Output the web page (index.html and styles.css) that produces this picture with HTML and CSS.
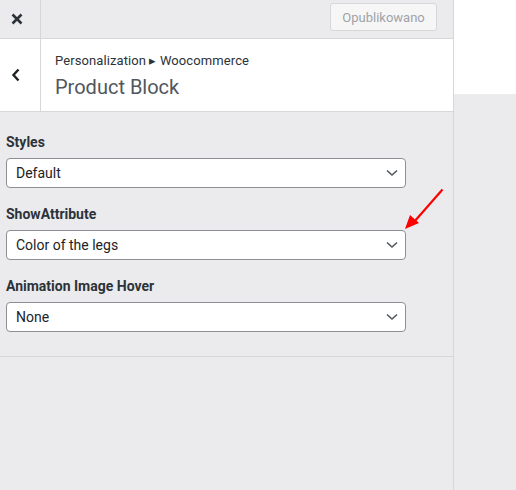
FILE: index.html
```html
<!DOCTYPE html>
<html>
<head>
<meta charset="utf-8">
<link rel="stylesheet" href="styles.css">
</head>
<body>
<div class="page">
  <aside class="sidebar">
    <div class="topbar">
      <div class="close-btn">
        <svg width="14" height="14" viewBox="0 0 14 14"><path d="M2.5 2.5 L11.5 11.5 M11.5 2.5 L2.5 11.5" stroke="#2c3338" stroke-width="2.6" stroke-linecap="butt"/></svg>
      </div>
      <div class="spacer"></div>
      <button class="publish" disabled>Opublikowano</button>
    </div>
    <div class="header">
      <div class="back-btn">
        <svg width="12" height="16" viewBox="0 0 12 16"><path d="M8.5 2.5 L3.5 8 L8.5 13.5" fill="none" stroke="#1d2327" stroke-width="2.4"/></svg>
      </div>
      <div class="titles">
        <div class="crumb">Personalization ▸ Woocommerce</div>
        <div class="title">Product Block</div>
      </div>
    </div>
    <div class="controls">
      <div class="control">
        <div class="label">Styles</div>
        <div class="select"><span>Default</span><svg class="chev" width="12" height="8" viewBox="0 0 12 8"><path d="M1 1.5 L6 6 L11 1.5" fill="none" stroke="#50575e" stroke-width="1.6"/></svg></div>
      </div>
      <div class="control">
        <div class="label">ShowAttribute</div>
        <div class="select"><span>Color of the legs</span><svg class="chev" width="12" height="8" viewBox="0 0 12 8"><path d="M1 1.5 L6 6 L11 1.5" fill="none" stroke="#50575e" stroke-width="1.6"/></svg></div>
      </div>
      <div class="control">
        <div class="label">Animation Image Hover</div>
        <div class="select"><span>None</span><svg class="chev" width="12" height="8" viewBox="0 0 12 8"><path d="M1 1.5 L6 6 L11 1.5" fill="none" stroke="#50575e" stroke-width="1.6"/></svg></div>
      </div>
    </div>
  </aside>
  <div class="preview">
    <div class="preview-top"></div>
  </div>
  <svg class="arrow" width="60" height="60" viewBox="0 0 60 60">
    <path d="M40.5 4.5 L12 37" stroke="#f00" stroke-width="2.2" fill="none"/>
    <path d="M3 44 L8 30 L17 38 Z" fill="#f00"/>
  </svg>
</div>
</body>
</html>
```
FILE: styles.css
```css
* { box-sizing: border-box; }
html, body { margin: 0; padding: 0; }
body {
  font-family: Roboto, "Noto Sans", sans-serif;
  background: #ebebee;
  width: 516px;
  height: 490px;
  overflow: hidden;
}
.page {
  position: relative;
  display: flex;
  height: 490px;
}
.sidebar {
  width: 454px;
  flex: none;
  border-right: 1px solid #d7d7da;
  background: #ebebee;
  display: flex;
  flex-direction: column;
}
.topbar {
  height: 39px;
  display: flex;
  align-items: center;
  border-bottom: 1px solid #d7d7da;
  background: #ebebee;
}
.close-btn {
  width: 41px;
  height: 38px;
  border-right: 1px solid #d7d7da;
  display: flex;
  align-items: center;
  justify-content: center;
  padding-right: 6px;
}
.spacer { flex: 1; }
.publish {
  width: 107px;
  height: 28px;
  margin-right: 16px;
  margin-top: -4px;
  background: #f6f6f7;
  border: 1px solid #d7d7da;
  border-radius: 3px;
  color: #a0a3a7;
  font-family: inherit;
  font-size: 13px;
  padding: 0;
}
.header {
  height: 73px;
  display: flex;
  background: #fff;
  border-bottom: 1px solid #d7d7da;
}
.back-btn {
  width: 41px;
  border-right: 1px solid #d7d7da;
  display: flex;
  align-items: center;
  justify-content: center;
  padding-right: 9px;
}
.titles {
  padding-left: 14px;
  padding-top: 14px;
}
.crumb {
  font-size: 13px;
  color: #2c3338;
  line-height: 16px;
  letter-spacing: 0.1px;
}
.title {
  font-size: 20px;
  color: #50575e;
  line-height: 24px;
  margin-top: 6px;
}
.controls {
  padding: 22px 0 24px 6px;
  border-bottom: 1px solid #d7d7da;
  display: flex;
  flex-direction: column;
  gap: 18px;
}
.label {
  font-size: 14px;
  font-weight: 700;
  color: #2c3338;
  line-height: 16px;
  margin-bottom: 8px;
}
.select {
  width: 400px;
  height: 30px;
  background: #fff;
  border: 1px solid #8c8f94;
  border-radius: 4px;
  display: flex;
  align-items: center;
  padding: 0 7px 0 9px;
  font-size: 14px;
  color: #1d2327;
}
.select span { flex: 1; }
.chev { display: block; }
.preview {
  flex: 1;
  display: flex;
  flex-direction: column;
}
.preview-top {
  height: 94px;
  background: #fff;
}
.arrow {
  position: absolute;
  left: 402px;
  top: 185px;
}
```
